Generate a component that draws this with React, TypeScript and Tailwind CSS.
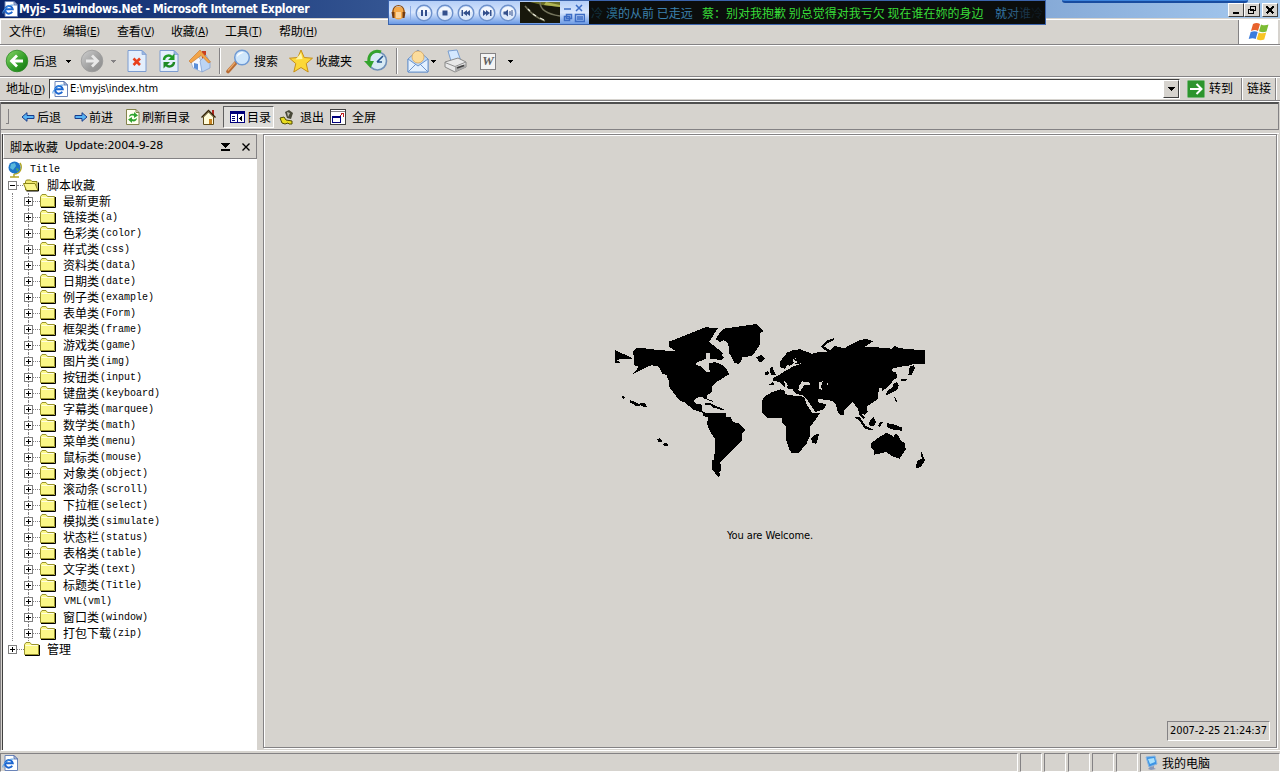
import React from 'react';

const ui = "font-['DejaVu_Sans_Condensed','Noto_Sans_CJK_SC',sans-serif]";
const cjk = "font-['Noto_Sans_CJK_SC',sans-serif]";

const folders: [string, string][] = [
  ['最新更新', ''],
  ['链接类', '(a)'],
  ['色彩类', '(color)'],
  ['样式类', '(css)'],
  ['资料类', '(data)'],
  ['日期类', '(date)'],
  ['例子类', '(example)'],
  ['表单类', '(Form)'],
  ['框架类', '(frame)'],
  ['游戏类', '(game)'],
  ['图片类', '(img)'],
  ['按钮类', '(input)'],
  ['键盘类', '(keyboard)'],
  ['字幕类', '(marquee)'],
  ['数学类', '(math)'],
  ['菜单类', '(menu)'],
  ['鼠标类', '(mouse)'],
  ['对象类', '(object)'],
  ['滚动条', '(scroll)'],
  ['下拉框', '(select)'],
  ['模拟类', '(simulate)'],
  ['状态栏', '(status)'],
  ['表格类', '(table)'],
  ['文字类', '(text)'],
  ['标题类', '(Title)'],
  ['', 'VML(vml)'],
  ['窗口类', '(window)'],
  ['打包下载', '(zip)'],
];

const menus: [string, string][] = [
  ['文件', 'F'],
  ['编辑', 'E'],
  ['查看', 'V'],
  ['收藏', 'A'],
  ['工具', 'T'],
  ['帮助', 'H'],
];

function IePage({ size = 16 }: { size?: number }) {
  return (
    <svg width={size} height={size} viewBox="0 0 16 16" className="shrink-0">
      <path d="M3 .5h9l3.500 3.500v11.500h-12.500z" fill="#fff" stroke="#6b84b8" />
      <path d="M12 .5v3.500h3.500z" fill="#bcd0ee" stroke="#4a62a0" strokeWidth=".8" />
      <path d="M10.200 10.800a3.800 3.800 0 1 1 .5-2.600H4" fill="none" stroke="#1c66d0" strokeWidth="2" />
      <path d="M1 12.500C-.5 9.500 8 2.500 11.500 4.300" fill="none" stroke="#4a9be8" strokeWidth="1" />
    </svg>
  );
}

function Folder({ open = false }: { open?: boolean }) {
  return (
    <svg width="16" height="14" viewBox="0 0 16 14" className="shrink-0">
      {open ? (
        <>
          <path d="M2.500 12V3.500l1-1.500h4l1.500 1.500h5V12z" fill="#f0e870" stroke="#8a8418" />
          <path d="M.5 5.500h11.500l3 7H3.500z" fill="#fbf68c" stroke="#8a8418" />
          <path d="M3.500 13h12V4.500" fill="none" stroke="#000" />
        </>
      ) : (
        <>
          <path d="M.5 12.500v-10l1.500-2h4l1.500 2h7v10z" fill="#fbf788" stroke="#9a942c" />
          <path d="M1.500 3.500h12" stroke="#fffde0" />
          <path d="M1 13.500h14.500V3" fill="none" stroke="#000" />
        </>
      )}
    </svg>
  );
}

function Toggle({ open = false }: { open?: boolean }) {
  return (
    <svg width="9" height="9" viewBox="0 0 9 9" className="shrink-0" shapeRendering="crispEdges">
      <path d="M.5.5h8v8h-8z" fill="#fff" stroke="#808080" />
      <path d={open ? 'M2 4.500h5' : 'M2 4.500h5M4.500 2v5'} stroke="#000" />
    </svg>
  );
}

function Caret({ className = '', color = '#000' }: { className?: string; color?: string }) {
  return (
    <svg width="5" height="3" viewBox="0 0 5 3" className={className} shapeRendering="crispEdges">
      <path d="M0 0h5L2.500 3z" fill={color} />
    </svg>
  );
}

function RoundArrow({ forward = false }: { forward?: boolean }) {
  return (
    <svg width="24" height="24" viewBox="0 0 24 24" className="shrink-0">
      <defs>
        <linearGradient id={forward ? 'ga' : 'gb'} x1="0" y1="0" x2="1" y2="1">
          <stop offset="0" stopColor={forward ? '#cfcfcf' : '#8ad66a'} />
          <stop offset=".6" stopColor={forward ? '#9d9d9d' : '#2f9c26'} />
          <stop offset="1" stopColor={forward ? '#8c8c8c' : '#157014'} />
        </linearGradient>
      </defs>
      <circle cx="12" cy="12" r="10.800" fill={`url(#${forward ? 'ga' : 'gb'})`} stroke={forward ? '#9a9a9a' : '#2c8a24'} strokeWidth=".8" />
      <path
        d={forward ? 'M6 12h11M12 6.500l5.500 5.500-5.500 5.500' : 'M18 12H7M12 6.500L6.500 12l5.500 5.500'}
        fill="none"
        stroke={forward ? '#e8e8e8' : '#fff'}
        strokeWidth="2.800"
      />
    </svg>
  );
}

function PageIcon({ kind }: { kind: 'stop' | 'refresh' }) {
  return (
    <svg width="20" height="24" viewBox="0 0 20 24" className="shrink-0">
      <path d="M1 1.500h14l4 4v17H1z" fill="#e4effc" stroke="#7d9cd0" />
      <path d="M15 1.500v4h4z" fill="#9ab8e4" stroke="#7d9cd0" strokeWidth=".7" />
      {kind === 'stop' ? (
        <path d="M6.500 9.500l6.500 6.500M13 9.500L6.500 16" stroke="#e8401c" strokeWidth="2.600" />
      ) : (
        <>
          <path d="M5 11c0-4 5-6 8-3" fill="none" stroke="#1f9a24" strokeWidth="2.400" />
          <path d="M15.500 4.500v6.500H9z" fill="#1f9a24" />
          <path d="M15 13c0 4-5 6-8 3" fill="none" stroke="#1f8a24" strokeWidth="2.400" />
          <path d="M4.500 19.500V13H11z" fill="#1f8a24" />
        </>
      )}
    </svg>
  );
}

function HomeIcon() {
  return (
    <svg width="24" height="24" viewBox="0 0 24 24" className="shrink-0">
      <path d="M14 2h4v8h-4z" fill="#c83c20" />
      <path d="M3 13l7-6 4 6v10l-9-4z" fill="#f4f8ff" stroke="#8ea8d0" strokeWidth=".7" />
      <path d="M12 12l6-6 4 7v6l-8 4z" fill="#bcd4f4" stroke="#7d9cd0" strokeWidth=".7" />
      <path d="M1 12L12 1l10.500 12-2 1L13 6.500 3 14z" fill="#f2a448" stroke="#c87428" strokeWidth=".6" />
      <path d="M6 14l4 1v6l-4-2z" fill="#5b8fd8" />
    </svg>
  );
}

function SearchIcon() {
  return (
    <svg width="26" height="26" viewBox="0 0 26 26" className="shrink-0">
      <path d="M2 23.500l8-9" stroke="#b86c34" strokeWidth="3.600" strokeLinecap="round" />
      <path d="M2 22.500l7-8" stroke="#eaa868" strokeWidth="1.200" />
      <circle cx="16" cy="9.500" r="7.300" fill="#cfe6fb" stroke="#6f9ad4" strokeWidth="1.500" />
      <path d="M11 9c0-4 4-5.500 7-4.500-3 1-6 3-7 4.500z" fill="#fff" />
    </svg>
  );
}

function StarIcon() {
  return (
    <svg width="24" height="24" viewBox="0 0 24 24" className="shrink-0">
      <path d="M12 1l3.200 7.500 8.300.7-6.300 5.400 2 8.400-7.200-4.500L4.800 23l2-8.400L.5 9.200l8.300-.7z" fill="#fcd838" stroke="#c89018" />
      <path d="M12 4l1.500 6-7 .5z" fill="#fff6a8" />
    </svg>
  );
}

function HistoryIcon() {
  return (
    <svg width="24" height="24" viewBox="0 0 24 24" className="shrink-0">
      <circle cx="13.500" cy="12" r="9" fill="#d8eaf4" stroke="#7090b8" strokeWidth="1.600" />
      <path d="M13 13l6-6M13 13h5" stroke="#24548c" strokeWidth="1.600" />
      <path d="M17 3C9 0 4 6 5 13" fill="none" stroke="#34a42c" strokeWidth="3" />
      <path d="M0 12h10l-3.500 7z" fill="#34a42c" />
    </svg>
  );
}

function MailIcon() {
  return (
    <svg width="22" height="24" viewBox="0 0 22 24" className="shrink-0">
      <path d="M1 10L11 1l10 9v13H1z" fill="#bcd8f8" stroke="#6f96cc" />
      <circle cx="11" cy="8" r="6" fill="#fbdc9c" stroke="#d8a050" strokeWidth=".7" />
      <path d="M1 10l10 7 10-7v13H1z" fill="#e4f1ff" stroke="#6f96cc" />
      <path d="M1 23l8-8M21 23l-8-8" stroke="#6f96cc" />
    </svg>
  );
}

function PrinterIcon() {
  return (
    <svg width="24" height="24" viewBox="0 0 24 24" className="shrink-0">
      <path d="M4 2l9-1 4 11H7z" fill="#d4e8ff" stroke="#6f96cc" strokeWidth=".9" />
      <path d="M1 13l13-4 8 4v5l-11 5-10-5z" fill="#e8e8e8" stroke="#808080" strokeWidth=".9" />
      <path d="M1 13.500l10 4 11-4.500" fill="none" stroke="#909090" />
      <path d="M11 18v5l11-5v-3z" fill="#a8a8a8" />
      <path d="M13 19l7-2.500" stroke="#404040" strokeWidth="1.500" />
    </svg>
  );
}

function WindowsFlag() {
  return (
    <svg width="22" height="20" viewBox="0 0 22 20">
      <path d="M5 2c3-1.500 5-1 7 0l-2 7c-2-1.200-4-1.200-7 0z" fill="#e8622c" />
      <path d="M13 2.500c3 1.200 5 1 7.500 0l-2 7c-3 1-5 .8-7.500-.3z" fill="#7cbc34" />
      <path d="M2.700 10c3-1.200 5-1 7 .1l-2 7c-2-1.100-4-1.200-7 0z" fill="#3c7cdc" />
      <path d="M10.700 10.500c3 1.200 5 1 7.500.1l-2 7c-3 1-5 .8-7.500-.3z" fill="#f8c424" />
    </svg>
  );
}

function WorldMap() {
  return (
    <svg width="330" height="170" viewBox="0 0 990 510" shapeRendering="crispEdges" className="block">
      <path d="M30 102l12 6 38 17v4l-30-1-14 5 12 9H30z" />
      <path d="M84 105L95 97h25l30 4 62 5-19-14V76l17-6 90-36 42 2-7 6-23 36 13 10 30 24-5 6 7 7-9 7-32-4v-18h-12v18l-29 12-3 6 18 6 10 11 4 5h10l-2-26 18-4 17 6 15 11 10 20-34 21-18 16v16l-14 10v10l-7 2-6-7-18 2-9 9 4 8 20 4v18l10 6h12l18 2h32v10l16 2 6 14 16 4 22 20-10 10v20l-66 66 2 24-6 6 4 10-6 4-18-20-2-28 8-2 2-64-12-16-12-28 4-20-14-4-4-10-28-10-24-20-16-6-32-42v-16l-8-20-12-2-10-22-22-4-12 4-44 22 18-22-14-4-2-28z" />
      <path d="M346 48l10-10 99-14 21 20-10 8v32l-16 24-12 12-26 4-4 14-8 6-12-4-16-30-2-28-14-10-10 6-14-8z" />
      <path d="M300 262h18l6 4 33 14-2 3-32-9-5-6h-18zM306 248l20 8-2 2-18-6zM454 124l14-8 12 10-6 10-12 2zM48 238l14 6-8 6zM74 252l16 6 14 6 6-4 10 2 6 10-8 2-10-6-14 2-18-10zM156 370l8-4 8 10-10 4zM174 384l8-4 8 8-10 4z" />
      <g transform="translate(480 0)">
        <path d="M-9 252L5 238l17-10 23-8 13 2 2 12 16 4 34 2 8 6 8 22 16 22 22 2-12 18-18 24v28l-10 22-24 28H80l-6-10-12-34v-38l-12-12v-12H8L-9 290z" />
        <path d="M138 366l14-10 10-2-8 30-12-4z" />
        <path fillRule="evenodd" d="M8 206h18l-2-20 16-8 22-14 22-12 26-10 22-14-14-8 42-12h20l16-4 14-14 14 4 16 2 20-12 25-12 20-3 20 7-25 16 18 1 32 2 30 3 10-10 10 8 40 4 40 3v41h-36l-14 6-26 2-22 6v8l12 4 2 16-12 6-4 10-12 10-18 16 2-12-8-2-6 24v12l-34 22 4 16-10 8-10-6 12 16-4 4-12-12-6-20-14-20-12 10-14 14-2 14-10 2-8-10-6-24-12-10-20-2-20-4-2 10 26 8-8 14-26 8-8-14-18-26-10-10-18-4-10-8-4-8-10 2-8-8 6-2-6-10-8-6 6 16-4 2-16-14-14-4-10 10-14 4zM104 206l8-10 22 4 2 8-18-2-6 10-6 10-6-4zM162 198l12-2-6 14 4 12-10-4zM186 198l6 10h-6z" />
        <path d="M46 150v-14l20-26 18-8 22-2 32 12-4 8-36 4-16 8 6 8-14 10-8-4-6 12-12-2z" />
        <path d="M86 132l10-8 30-4 14 8-28 14-24 2 10-6z" />
        <path d="M168 92l16-18 22-7 2 5-18 8-12 12 18 12-11 2zM434 152l12-4 4 8-10 22-10-2zM408 190l20-2-4 6-16 2zM362 234l10-14 10-4 2-12 12-6 6 10-6 14-16 8-16 8zM386 238l12 18-6 2zM14 156l8-4 8 20 4 4-16 2zM0 170l10-6 2 10-10 4zM270 304h14l6 8 12 18 22 10-2 4-22-6-16-22zM314 316l12-12 8 14-10 14-12-4zM338 330l10-14 6 4-10 12zM366 322l18 2 26 10v10l-20-2-24-8z" />
        <path d="M318 382l26-20 22-12 20 12 6-10 8 6 8 16 12 8 2 18-18 28-20-6-20-14-16 4-22 4v-12l-8-8zM468 404l4 8 8 22-14 20-14 2 4-20 14-8z" />
      </g>
    </svg>
  );
}

function MediaButton({ d }: { d: string }) {
  return (
    <svg width="18" height="18" viewBox="0 0 18 18" className="shrink-0">
      <circle cx="9" cy="9" r="7.800" fill="#dce8fa" stroke="#6c90cc" strokeWidth="1.400" />
      <path d="M3 8a6 5 0 0 1 12 0z" fill="#fff" opacity=".7" />
      <path d={d} fill="#34508c" />
    </svg>
  );
}

function Player() {
  return (
    <div className="absolute left-[388px] top-0 flex h-[25px] w-[658px] border border-[#3c64ac]">
      <div className="flex w-[200px] items-center bg-gradient-to-b from-[#b4cef8] via-[#d8e6fc] to-[#6c9ae4] pl-[2px]">
        <svg width="15" height="18" viewBox="0 0 15 18" className="shrink-0">
          <circle cx="7.500" cy="9" r="6.500" fill="#f4a848" />
          <path d="M2 10V7a5.500 5.500 0 0 1 11 0v3" fill="none" stroke="#8c4c10" strokeWidth="1.200" />
          <path d="M.5 8h3v6h-2zM11.500 8h3l-1 6h-2z" fill="#743c10" />
          <path d="M5 8h5v6H5z" fill="#fbd49c" />
        </svg>
        <div className="mx-[4px] h-[14px] w-px bg-[#8cace4]" />
        <div className="flex gap-[3px]">
          <MediaButton d="M6 6h2v6H6zM10 6h2v6h-2z" />
          <MediaButton d="M6.500 6.500h5v5h-5z" />
          <MediaButton d="M4.500 6h1.500v6H4.500zM6 9l4-3v6zM9 9l4-3v6z" />
          <MediaButton d="M12 6h1.500v6H12zM12 9L8 6v6zM9 9L5 6v6z" />
          <MediaButton d="M4.500 7.500h2L9 5.500v7l-2.500-2h-2zM10.500 7h1v4h-1zM12.500 6h1v6h-1z" />
        </div>
        <svg width="40" height="21" viewBox="0 0 40 21" className="ml-[3px] shrink-0">
          <path d="M0 0h40v21H0z" fill="#18180c" />
          <path d="M10 0h30v5L22 3z" fill="#686c28" />
          <path d="M26 0l14 3v2L24 3z" fill="#b0b454" />
          <path d="M5 4c6 8 12 12 20 15M20 0c0 7 6 12 20 14" fill="none" stroke="#74745c" strokeWidth="1.500" />
          <path d="M8 7l2 2M13 12l3 2M20 16l4 2" stroke="#e8e8d8" strokeWidth="1.300" />
        </svg>
        <svg width="23" height="20" viewBox="0 0 23 20" className="ml-[2px] shrink-0">
          <path d="M2 6h7M14 2l6 6M20 2l-6 6M4.500 11.500h5v4h-5zM2.500 13.500h5v4h-5zM13.500 11.500h9v7h-9zM15 14h6M15 16h6" fill="none" stroke="#3c6cc4" strokeWidth="1.500" />
        </svg>
      </div>
      <div className={`flex flex-1 items-center overflow-hidden whitespace-pre bg-[#0b0d0c] text-[12px] leading-[16px] ${cjk}`}>
        <span className="ml-[2px] w-[15px] overflow-hidden text-[#12303c]">冷</span>
        <span className="text-[#2a6c8c]">漠</span>
        <span className="w-[72px] text-[#3c80ac]">的从前 已走远</span>
        <span className="ml-[12px] w-[283px] text-[#38dc38]">蔡：别对我抱歉 别总觉得对我亏欠 现在谁在妳的身边</span>
        <span className="ml-[10px] text-[#3478a8]">就</span>
        <span className="text-[#2c5c80]">对</span>
        <span className="text-[#1a3448]">谁</span>
        <span className="text-[#101c24]">冷</span>
      </div>
    </div>
  );
}

function CaptionButton({ d, className = '' }: { d: string; className?: string }) {
  return (
    <span className={`flex h-[14px] w-4 items-center justify-center border border-b-[#404040] border-l-white border-r-[#404040] border-t-white bg-[#d6d3ce] ${className}`}>
      <svg width="12" height="10" viewBox="0 0 12 10" shapeRendering="crispEdges">
        <path d={d} fill="none" stroke="#000" strokeWidth="1.500" />
      </svg>
    </span>
  );
}

function TitleBar() {
  return (
    <div className="relative flex h-[18px] shrink-0 items-center bg-gradient-to-r from-[#0a246a] to-[#a6caf0] pl-[2px] pr-[2px]">
      <IePage />
      <span className={`ml-px whitespace-nowrap text-[12px] font-bold leading-[18px] tracking-[-0.35px] text-white ${ui}`}>
        Myjs- 51windows.Net - Microsoft Internet Explorer
      </span>
      <div className="absolute right-[32px] top-0 h-[3px] w-[186px] rounded-b-[4px] border-b-2 border-[#184ca0] bg-[#3c84dc]" />
      <div className="ml-auto flex pt-px">
        <CaptionButton d="M3 8h6" />
        <CaptionButton d="M4.500 1.500h5v4h-5zM2.500 4.500h5v4h-5z" />
        <CaptionButton d="M2.500 1.500l7 7M9.500 1.500l-7 7" className="ml-[2px]" />
      </div>
      <Player />
    </div>
  );
}

function MenuBar() {
  return (
    <div className="flex h-[26px] shrink-0 border-b border-t border-b-[#848284] border-t-white">
      <div className={`flex flex-1 items-center gap-[16px] border-l border-white pl-[8px] text-[12px] ${ui}`}>
        {menus.map(([label, key]) => (
          <span key={key} className="flex w-[38px] items-center whitespace-nowrap tracking-[-0.2px]">
            {label}
            <span className="text-[11px]">
              (<span className="underline">{key}</span>)
            </span>
          </span>
        ))}
      </div>
      <div className="mr-[2px] flex w-[40px] items-center justify-center border-l border-[#848284] bg-white">
        <WindowsFlag />
      </div>
    </div>
  );
}

function Divider() {
  return <div className="h-[26px] w-[2px] shrink-0 border-l border-r border-l-[#848284] border-r-white" />;
}

function MainToolbar() {
  return (
    <div className={`flex h-[32px] shrink-0 items-center border-b border-t border-b-[#848284] border-t-white pl-[5px] text-[12px] ${cjk}`}>
      <RoundArrow />
      <span className="ml-[4px] w-[24px]">后退</span>
      <Caret className="ml-[9px]" />
      <span className="ml-[9px] flex"><RoundArrow forward /></span>
      <Caret className="ml-[7px]" color="#848284" />
      <span className="ml-[11px] flex"><PageIcon kind="stop" /></span>
      <span className="ml-[12px] flex"><PageIcon kind="refresh" /></span>
      <span className="ml-[9px] flex"><HomeIcon /></span>
      <span className="ml-[7px] flex"><Divider /></span>
      <span className="ml-[5px] flex"><SearchIcon /></span>
      <span className="ml-[2px] w-[24px]">搜索</span>
      <span className="ml-[11px] flex"><StarIcon /></span>
      <span className="ml-[3px] w-[36px]">收藏夹</span>
      <span className="ml-[12px] flex"><HistoryIcon /></span>
      <span className="ml-[8px] flex"><Divider /></span>
      <span className="ml-[9px] flex"><MailIcon /></span>
      <Caret className="ml-[2px]" />
      <span className="ml-[8px] flex"><PrinterIcon /></span>
      <span className="ml-[12px] flex h-[17px] w-[16px] items-center justify-center border border-[#848284] bg-[#f4f4f4] font-['Liberation_Serif',serif] text-[13px] font-bold italic text-[#606060]">
        W
      </span>
      <Caret className="ml-[12px]" />
    </div>
  );
}

function AddressBar() {
  return (
    <div className={`flex h-[24px] shrink-0 items-center border-b border-t border-b-[#848284] border-t-white text-[12px] ${ui}`}>
      <span className="ml-[6px] w-[43px] whitespace-nowrap">
        地址<span className="text-[11px]">(<span className="underline">D</span>)</span>
      </span>
      <div className="flex h-[20px] w-[1131px] items-center border border-b-white border-l-[#404040] border-r-white border-t-[#404040] bg-white pl-[2px]">
        <IePage />
        <span className="ml-[2px] text-[11px] tracking-[-0.1px]">E:\myjs\index.htm</span>
        <span className="ml-auto flex h-[18px] w-[16px] items-center justify-center border border-b-[#404040] border-l-white border-r-[#404040] border-t-white bg-[#d6d3ce]">
          <svg width="7" height="4" viewBox="0 0 7 4" shapeRendering="crispEdges"><path d="M0 0h7L3.500 4z" /></svg>
        </span>
      </div>
      <svg width="18" height="18" viewBox="0 0 18 18" className="ml-[7px] shrink-0">
        <rect x=".5" y=".5" width="17" height="17" rx="1" fill="#2c942c" stroke="#78b878" />
        <path d="M3 9h11M9.500 4l5 5-5 5" fill="none" stroke="#fff" strokeWidth="2" />
      </svg>
      <span className="ml-[4px] w-[24px] whitespace-nowrap">转到</span>
      <div className="ml-[8px] h-[22px] w-[2px] border-l border-r border-l-[#848284] border-r-white" />
      <span className="ml-[4px] w-[24px] whitespace-nowrap">链接</span>
      <div className="ml-[4px] h-[22px] w-[2px] border-l border-r border-l-[#848284] border-r-white" />
    </div>
  );
}

function BlueArrow({ flip = false }: { flip?: boolean }) {
  return (
    <svg width="14" height="10" viewBox="0 0 14 10" className="shrink-0">
      <path d={flip ? 'M13 5L8 .7v2.800H1v3h7v2.800z' : 'M1 5L6 .7v2.800h7v3H6v2.800z'} fill="#58b4f4" stroke="#183c8c" />
    </svg>
  );
}

function PageToolbar() {
  return (
    <div className={`flex h-[28px] shrink-0 items-center border-b border-r border-t-2 border-b-[#848284] border-r-[#848284] border-t-[#505050] text-[12px] whitespace-nowrap ${cjk}`}>
      <div className="ml-[5px] h-[15px] w-[3px] border-b border-r border-b-[#848284] border-r-[#848284]" />
      <span className="ml-[12px] flex"><BlueArrow /></span>
      <span className="ml-[2px] w-[24px]">后退</span>
      <span className="ml-[13px] flex"><BlueArrow flip /></span>
      <span className="ml-px w-[24px]">前进</span>
      <svg width="14" height="16" viewBox="0 0 14 16" className="ml-[13px] shrink-0">
        <path d="M.5.5h9.500l3 3v12H.5z" fill="#fffff0" stroke="#84844c" />
        <path d="M10 .5v3h3" fill="none" stroke="#84844c" />
        <path d="M3 8c0-3 3-4 5-3V3l4 3.500L8 9V7C6 6 4.500 7 3 8zM11 9c0 3-3 4-5 3v2l-4-3.500L6 8v2c2 1 3.500 0 5-1z" fill="#30a430" />
      </svg>
      <span className="ml-[2px] w-[47px]">刷新目录</span>
      <svg width="15" height="16" viewBox="0 0 15 16" className="ml-[12px] shrink-0">
        <path d="M11 1h2v5h-2z" fill="#b02820" />
        <path d="M2.500 8v7.500h10V8l-5-5z" fill="#fffbd8" stroke="#604c18" />
        <path d="M.5 8.500l7-7 7 7" fill="none" stroke="#302000" strokeWidth="1.300" />
        <path d="M8 10h3v5H8z" fill="#c88424" />
      </svg>
      <div className="ml-[7px] flex h-[22px] w-[51px] items-center border border-b-white border-l-[#606060] border-r-white border-t-[#606060] bg-[#deddda] pl-[6px]">
        <svg width="15" height="12" viewBox="0 0 15 12" shapeRendering="crispEdges" className="shrink-0">
          <path d="M.5.5h14v11H.5z" fill="#fff" stroke="#00007c" />
          <path d="M0 0h15v3H0z" fill="#00007c" />
          <path d="M7.500 3v9M2 5.500h3M2 7.500h3M2 9.500h3" stroke="#00007c" />
          <path d="M12 5v5L9 7.500z" fill="#000" />
        </svg>
        <span className="ml-[2px] w-[24px]">目录</span>
      </div>
      <svg width="15" height="16" viewBox="0 0 15 16" className="ml-[5px] shrink-0">
        <path d="M6 3l4-2 4 3-2 6-4-1z" fill="#484838" />
        <path d="M8 3l3 1-2 4z" fill="#c0c0b0" />
        <path d="M1 9l4-1 2 3 6 1v3h-3l-1-1-3 1-3-1z" fill="#e8dc20" stroke="#504c00" />
      </svg>
      <span className="ml-[6px] w-[24px]">退出</span>
      <svg width="16" height="16" viewBox="0 0 16 16" className="ml-[6px] shrink-0" shapeRendering="crispEdges">
        <path d="M.5.5h15v15H.5z" fill="#fff" stroke="#404040" />
        <path d="M1 2.500h14" stroke="#848284" />
        <path d="M2.500 7.500h8v6h-8z" fill="#fff" stroke="#00007c" />
        <path d="M2 8h9" stroke="#00007c" strokeWidth="2" />
        <path d="M10 7l3-3M10.500 4.500h3v3" fill="none" stroke="#c02020" />
      </svg>
      <span className="ml-[6px]">全屏</span>
    </div>
  );
}

function TreeLabel({ han, latin }: { han: string; latin: string }) {
  return (
    <span className="flex h-4 items-center whitespace-nowrap text-[12px] leading-[16px]">
      {han && <span className={cjk}>{han}</span>}
      {latin && <span className="pl-px pt-px font-['Liberation_Mono',monospace] text-[10px]">{latin}</span>}
    </span>
  );
}

function Sidebar() {
  return (
    <div className="flex w-[255px] shrink-0 flex-col border-l border-[#404040] bg-white">
      <div className={`flex h-[25px] shrink-0 items-center border border-l-white border-t-[#848284] border-b-[#848284] border-r-[#848284] bg-[#d6d3ce] pl-[6px] text-[12px] ${cjk}`}>
        <span>脚本收藏</span>
        <span className="ml-[7px] font-['DejaVu_Sans',sans-serif] text-[11px] tracking-[-0.15px]">Update:2004-9-28</span>
        <svg width="9" height="8" viewBox="0 0 9 8" className="ml-auto" shapeRendering="crispEdges">
          <path d="M0 0h9v1H8L4.500 5 1 1H0zM0 6h9v1.500H0z" />
        </svg>
        <svg width="8" height="8" viewBox="0 0 8 8" className="ml-[12px] mr-[6px]">
          <path d="M.5.500l7 7M7.500.500l-7 7" stroke="#000" strokeWidth="1.400" />
        </svg>
      </div>
      <div className="flex flex-col pl-[5px] pt-[2px]">
        <div className="flex h-4 items-center">
          <svg width="14" height="17" viewBox="0 0 14 17" className="shrink-0">
            <path d="M12 2c3 5 0 11-6 11M6 13v3M2 16h9" fill="none" stroke="#b4a828" strokeWidth="1.500" />
            <circle cx="6.500" cy="6.500" r="6" fill="#1c74c8" />
            <path d="M3 3l4-1 1 3-3 4-3-2z" fill="#58b8dc" />
            <path d="M8 7l3 1-2 3z" fill="#48a868" />
          </svg>
          <span className="ml-[7px]"><TreeLabel han="" latin="Title" /></span>
        </div>
        <div className="flex h-4 items-center">
          <Toggle open />
          <span className="w-[6px] border-t border-dotted border-[#848284]" />
          <Folder open />
          <span className="ml-[8px]"><TreeLabel han="脚本收藏" latin="" /></span>
        </div>
        <div className="ml-[4px] border-l border-dotted border-[#848284] pl-[11px]">
          {folders.map(([han, latin]) => (
            <div key={han + latin} className="flex h-4 items-center">
              <div className="flex h-4 w-[9px] flex-col items-center">
                <span className="h-[4px] border-l border-dotted border-[#848284]" />
                <Toggle />
                <span className="h-[3px] border-l border-dotted border-[#848284]" />
              </div>
              <span className="w-[7px] border-t border-dotted border-[#848284]" />
              <Folder />
              <span className="ml-[7px]"><TreeLabel han={han} latin={latin} /></span>
            </div>
          ))}
        </div>
        <div className="flex h-4 items-center">
          <Toggle />
          <span className="w-[7px] border-t border-dotted border-[#848284]" />
          <Folder />
          <span className="ml-[7px]"><TreeLabel han="管理" latin="" /></span>
        </div>
      </div>
    </div>
  );
}

function Welcome() {
  return (
    <div className="mr-[2px] ml-[6px] mb-[2px] flex flex-1 flex-col items-center border border-[#848284] shadow-[inset_1px_1px_0_#fff,1px_1px_0_#fff]">
      <div className="mt-[181px]"><WorldMap /></div>
      <div className={`mt-[43px] h-[14px] whitespace-nowrap text-[11px] leading-[14px] tracking-[-0.1px] ${ui}`}>You are Welcome.</div>
      <div className={`mb-[6px] mr-[6px] mt-auto flex h-[20px] w-[103px] items-center justify-center self-end whitespace-nowrap border border-b-white border-l-[#848284] border-r-white border-t-[#848284] text-[11px] tracking-[-0.1px] ${ui}`}>
        2007-2-25 21:24:37
      </div>
    </div>
  );
}

function StatusBar() {
  const well = 'h-full border border-b-white border-l-[#848284] border-r-white border-t-[#848284]';
  return (
    <div className="mt-[2px] flex h-[19px] shrink-0 gap-[2px]">
      <div className={`${well} flex flex-1 items-center pl-px`}><IePage /></div>
      {[0, 1, 2, 3, 4].map((i) => <div key={i} className={`${well} w-[22px]`} />)}
      <div className={`${well} flex w-[140px] items-center pl-[4px] text-[12px] ${cjk}`}>
        <svg width="14" height="16" viewBox="0 0 14 16" className="shrink-0">
          <path d="M1 2l9-1 2 8-8 3z" fill="#3c94e4" stroke="#88b4e0" />
          <path d="M3 4l6-1 1 4-5 2z" fill="#a8e0fc" />
          <path d="M5 12l4-1v2l2 1-5 1-3-1z" fill="#8898b8" />
        </svg>
        <span className="ml-[3px]">我的电脑</span>
      </div>
    </div>
  );
}

export default function App() {
  return (
    <div className="flex h-[772px] w-[1280px] flex-col overflow-hidden bg-[#d6d3ce] text-black">
      <TitleBar />
      <div className="h-px shrink-0" />
      <MenuBar />
      <MainToolbar />
      <AddressBar />
      <div className="flex min-h-0 flex-1 flex-col border-t border-white">
        <div className="flex min-h-0 flex-1 flex-col border-l border-[#848284] border-b border-b-white pr-px">
          <PageToolbar />
          <div className="mt-[3px] flex min-h-0 flex-1 border-t border-white pl-px">
            <Sidebar />
            <Welcome />
          </div>
        </div>
      </div>
      <StatusBar />
    </div>
  );
}
